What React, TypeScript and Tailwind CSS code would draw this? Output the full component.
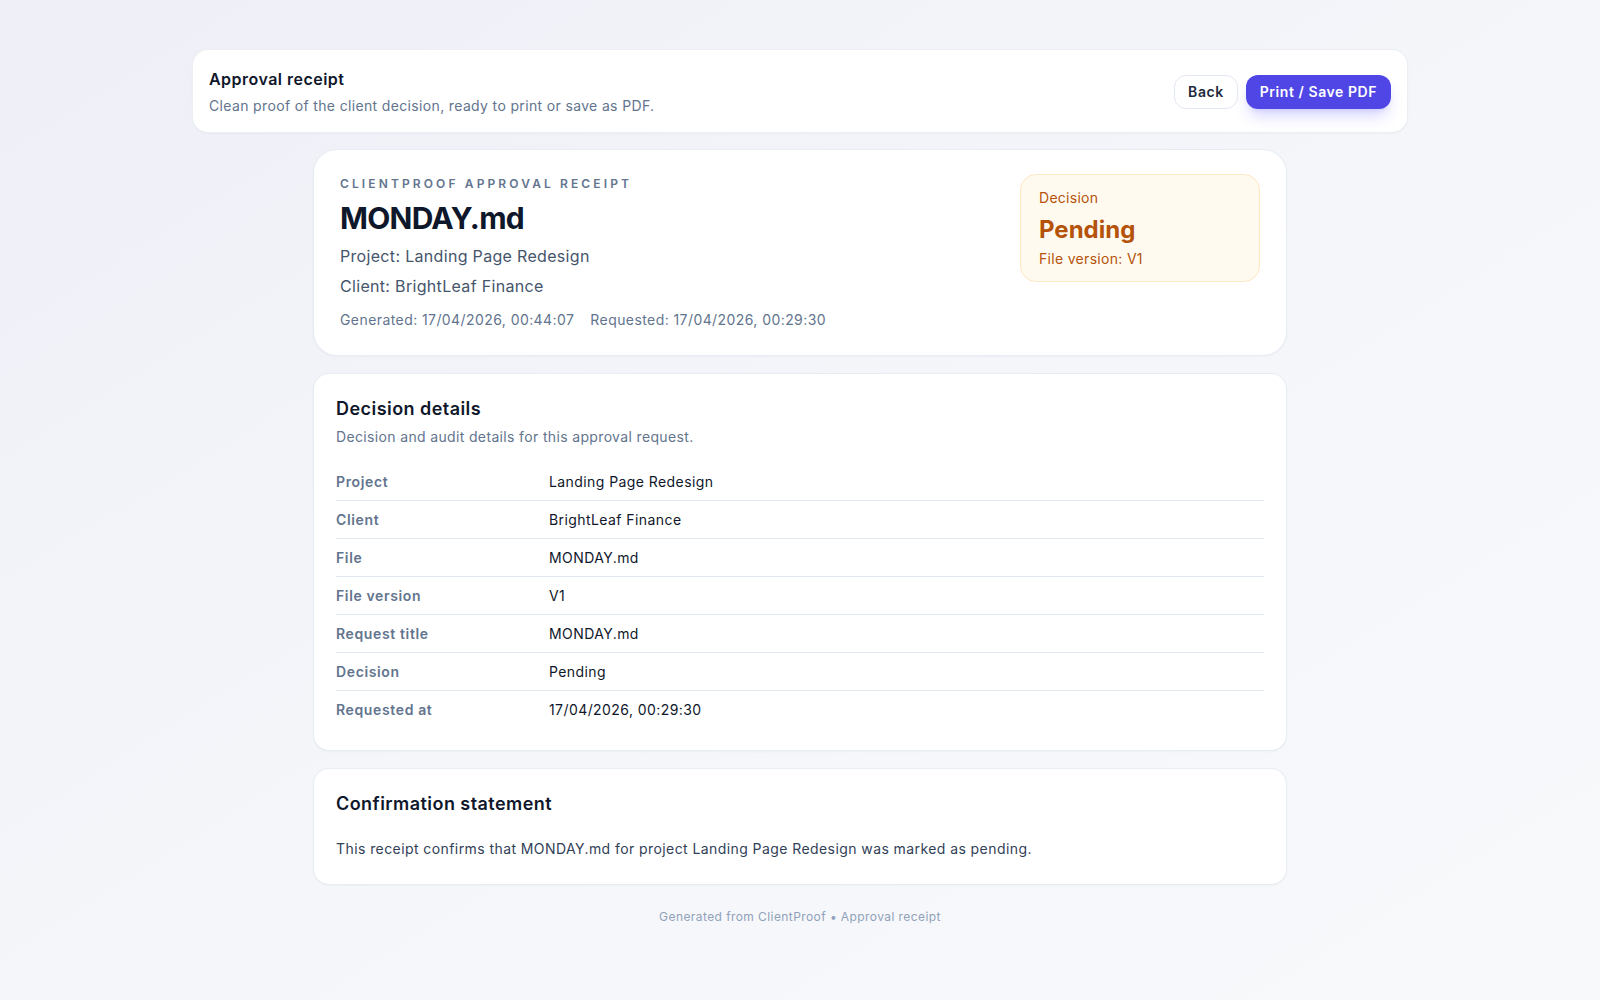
const rows: [string, string][] = [
  ["Project", "Landing Page Redesign"],
  ["Client", "BrightLeaf Finance"],
  ["File", "MONDAY.md"],
  ["File version", "V1"],
  ["Request title", "MONDAY.md"],
  ["Decision", "Pending"],
  ["Requested at", "17/04/2026, 00:29:30"],
];

export default function App() {
  return (
    <div
      className="min-h-screen bg-linear-to-br from-[#eeeff7] via-[#f5f6fa] to-[#f8f9fb] pt-[49px] pb-16 text-slate-900"
      style={{ fontFamily: "Inter, 'Noto Sans', sans-serif" }}
    >
      {/* Toolbar */}
      <div className="mx-auto flex max-w-[1216px] items-center justify-between rounded-2xl border border-slate-200/70 bg-white px-4 pt-[17px] pb-[16px] shadow-[0_1px_2px_rgba(15,23,42,0.03)]">
        <div>
          <h1 className="text-base font-semibold leading-6 tracking-[0.03em] text-slate-900">Approval receipt</h1>
          <p className="mt-[5px] text-sm leading-5 tracking-[0.025em] text-slate-500">
            Clean proof of the client decision, ready to print or save as PDF.
          </p>
        </div>
        <div className="flex items-center gap-2">
          <button className="h-[34px] rounded-xl border border-slate-200 bg-white px-[13px] text-sm font-semibold tracking-[0.04em] text-slate-800">
            Back
          </button>
          <button className="h-[34px] rounded-xl bg-[#4f46e5] px-[14px] text-sm font-semibold tracking-[0.04em] text-white shadow-lg shadow-indigo-500/25">
            Print / Save PDF
          </button>
        </div>
      </div>

      <div className="mx-auto mt-[16px] flex max-w-[974px] flex-col gap-[17px]">
        {/* Receipt header */}
        <section className="flex items-start justify-between rounded-3xl border border-slate-200/80 bg-white px-[26px] pt-[24px] pb-[25px] shadow-[0_1px_2px_rgba(15,23,42,0.03)]">
          <div>
            <div className="pt-[2px] text-xs font-semibold uppercase leading-4 tracking-[0.26em] text-slate-500">
              ClientProof approval receipt
            </div>
            <h2 className="mt-[8px] text-[30px] font-bold leading-9 tracking-tight text-slate-900">MONDAY.md</h2>
            <p className="mt-[6px] text-base leading-7 tracking-[0.02em] text-slate-600">
              Project: Landing Page Redesign
            </p>
            <p className="mt-[2px] text-base leading-7 tracking-[0.02em] text-slate-600">Client: BrightLeaf Finance</p>
            <div className="mt-[10px] flex gap-4 text-sm leading-5 tracking-[0.03em] text-slate-500">
              <span>Generated: 17/04/2026, 00:44:07</span>
              <span>Requested: 17/04/2026, 00:29:30</span>
            </div>
          </div>
          <div className="w-60 rounded-2xl border border-[#fde9c4] bg-[#fffaf0] px-[18px] pt-[13px] pb-[12px] text-[#b45309]">
            <div className="text-sm leading-5 tracking-[0.02em]">Decision</div>
            <div className="mt-[6px] text-2xl font-bold leading-8">Pending</div>
            <div className="mt-[3px] text-sm leading-5 tracking-[0.022em]">File version: V1</div>
          </div>
        </section>

        {/* Detail table */}
        <section className="rounded-2xl border border-slate-200/80 bg-white px-[22px] pt-[21px] pb-[22px] shadow-[0_1px_2px_rgba(15,23,42,0.03)]">
          <h3 className="text-lg font-semibold leading-7 tracking-[0.025em] text-slate-900">Decision details</h3>
          <p className="mt-[4px] text-sm leading-5 tracking-[0.025em] text-slate-500">
            Decision and audit details for this approval request.
          </p>
          <div className="mt-[16px]">
            {rows.map(([label, value], i) => (
              <div
                key={label}
                className={
                  i < rows.length - 1
                    ? "flex border-b border-slate-200 pt-[9px] pb-2 text-sm leading-5"
                    : "flex pt-[9px] pb-2 text-sm leading-5"
                }
              >
                <div className="w-[213px] shrink-0 font-semibold tracking-[0.045em] text-slate-500">{label}</div>
                <div className="tracking-[0.03em] text-slate-900">{value}</div>
              </div>
            ))}
          </div>
        </section>

        {/* Statement */}
        <section className="rounded-2xl border border-slate-200/80 bg-white px-[22px] pt-[21px] pb-[23px] shadow-[0_1px_2px_rgba(15,23,42,0.03)]">
          <h3 className="text-lg font-semibold leading-7 tracking-[0.025em] text-slate-900">Confirmation statement</h3>
          <p className="mt-[19px] text-sm leading-6 tracking-[0.03em] text-slate-700">
            This receipt confirms that MONDAY.md for project Landing Page Redesign was marked as pending.
          </p>
        </section>
      </div>

      <p className="mt-6 text-center text-xs leading-4 tracking-[0.035em] text-slate-400">
        Generated from ClientProof • Approval receipt
      </p>
    </div>
  );
}
